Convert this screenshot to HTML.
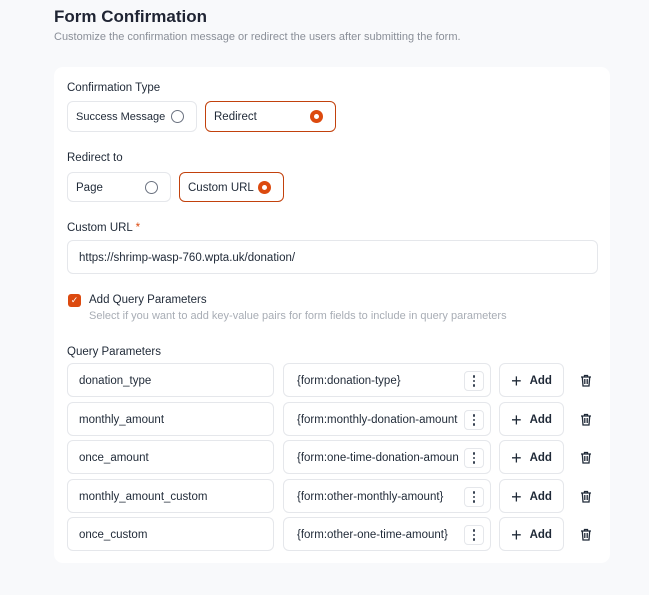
<!DOCTYPE html>
<html><head><style>
*{box-sizing:border-box;margin:0;padding:0}
body{width:649px;height:595px;background:#f8f9fb;font-family:"Liberation Sans",sans-serif;color:#1f2937;position:relative;overflow:hidden}
.a{position:absolute;white-space:nowrap}
.card{position:absolute;left:54px;top:67px;width:556px;height:496px;background:#fff;border-radius:9px}
.box{position:absolute;border:1px solid #e5e7eb;border-radius:6px;background:#fff;font-size:11.5px;color:#1f2937;display:flex;align-items:center;padding-left:8px;padding-top:1px}
.sel{border-color:#c2410c}
.r{position:absolute;width:13px;height:13px;border-radius:50%;border:1.3px solid #6b7280;top:50%;margin-top:-6.5px}
.ron{border:none;background:#dc4a0f}
.ron::after{content:"";position:absolute;left:4px;top:4px;width:5px;height:5px;border-radius:50%;background:#fff}
.lbl{font-size:11.5px;color:#1f2937}
.in{padding-left:11px}
.keb{position:absolute;right:6px;top:7px;width:20px;height:20px;border:1px solid #e5e7eb;border-radius:4px;display:flex;flex-direction:column;align-items:center;justify-content:center;gap:2px;background:#fff}
.keb i{width:2.5px;height:2.5px;background:#374151;border-radius:50%;display:block}
.add{justify-content:center;padding-left:0;font-weight:bold;font-size:11.5px}
.add span{font-size:18px;font-weight:normal;margin-right:8px;line-height:1}
.tr{position:absolute;left:580px;width:12px;height:13px}
</style></head><body>
<div class="a" style="left:54px;top:7px;font-size:17px;font-weight:bold;color:#1f2433">Form Confirmation</div>
<div class="a" style="left:54px;top:31px;font-size:11px;color:#8a8f98">Customize the confirmation message or redirect the users after submitting the form.</div>
<div class="card"></div>
<div class="a lbl" style="left:67px;top:82px">Confirmation Type</div>
<div class="box" style="left:67px;top:101px;width:130px;height:31px;font-size:11px">Success Message<div class="r" style="left:103px"></div></div>
<div class="box sel" style="left:205px;top:101px;width:131px;height:31px">Redirect<div class="r ron" style="left:104px"></div></div>
<div class="a lbl" style="left:67px;top:152px">Redirect to</div>
<div class="box" style="left:67px;top:172px;width:104px;height:30px">Page<div class="r" style="left:77px"></div></div>
<div class="box sel" style="left:179px;top:172px;width:105px;height:30px">Custom URL<div class="r ron" style="left:78px"></div></div>
<div class="a lbl" style="left:67px;top:222px">Custom URL <span style="color:#dc4a0f">*</span></div>
<div class="box in" style="left:67px;top:240px;width:531px;height:34px">https://shrimp-wasp-760.wpta.uk/donation/</div>
<div class="a" style="left:68px;top:294px;width:13px;height:13px;background:#dc4a0f;border-radius:3px;color:#fff;font-size:9px;text-align:center;line-height:13px">✓</div>
<div class="a lbl" style="left:89px;top:294px">Add Query Parameters</div>
<div class="a" style="left:89px;top:310px;font-size:11px;color:#a8adb5">Select if you want to add key-value pairs for form fields to include in query parameters</div>
<div class="a lbl" style="left:67px;top:346px">Query Parameters</div>

<svg width="0" height="0" style="position:absolute"><symbol id="t" viewBox="0 0 12 13"><path d="M1 3h10M4.5 3V1.5h3V3M2.3 3l.7 9h6l.7-9M4.8 5v5M7.2 5v5" fill="none" stroke="#1f2937" stroke-width="1.3"/></symbol></svg>

<div class="box in" style="left:67px;top:363px;width:207px;height:34px">donation_type</div>
<div class="box in" style="left:283px;top:363px;width:208px;height:34px;padding-left:13px">{form:donation-type}<div class="keb"><i></i><i></i><i></i></div></div>
<div class="box add" style="left:499px;top:363px;width:65px;height:34px"><span>+</span>Add</div>
<svg class="tr" style="top:374px"><use href="#t"/></svg>

<div class="box in" style="left:67px;top:402px;width:207px;height:34px">monthly_amount</div>
<div class="box in" style="left:283px;top:402px;width:208px;height:34px;padding-left:13px;overflow:hidden">{form:monthly-donation-amount<div class="keb"><i></i><i></i><i></i></div></div>
<div class="box add" style="left:499px;top:402px;width:65px;height:34px"><span>+</span>Add</div>
<svg class="tr" style="top:413px"><use href="#t"/></svg>

<div class="box in" style="left:67px;top:440px;width:207px;height:34px">once_amount</div>
<div class="box in" style="left:283px;top:440px;width:208px;height:34px;padding-left:13px;overflow:hidden">{form:one-time-donation-amoun<div class="keb"><i></i><i></i><i></i></div></div>
<div class="box add" style="left:499px;top:440px;width:65px;height:34px"><span>+</span>Add</div>
<svg class="tr" style="top:451px"><use href="#t"/></svg>

<div class="box in" style="left:67px;top:479px;width:207px;height:34px">monthly_amount_custom</div>
<div class="box in" style="left:283px;top:479px;width:208px;height:34px;padding-left:13px">{form:other-monthly-amount}<div class="keb"><i></i><i></i><i></i></div></div>
<div class="box add" style="left:499px;top:479px;width:65px;height:34px"><span>+</span>Add</div>
<svg class="tr" style="top:490px"><use href="#t"/></svg>

<div class="box in" style="left:67px;top:517px;width:207px;height:34px">once_custom</div>
<div class="box in" style="left:283px;top:517px;width:208px;height:34px;padding-left:13px">{form:other-one-time-amount}<div class="keb"><i></i><i></i><i></i></div></div>
<div class="box add" style="left:499px;top:517px;width:65px;height:34px"><span>+</span>Add</div>
<svg class="tr" style="top:528px"><use href="#t"/></svg>
</body></html>
